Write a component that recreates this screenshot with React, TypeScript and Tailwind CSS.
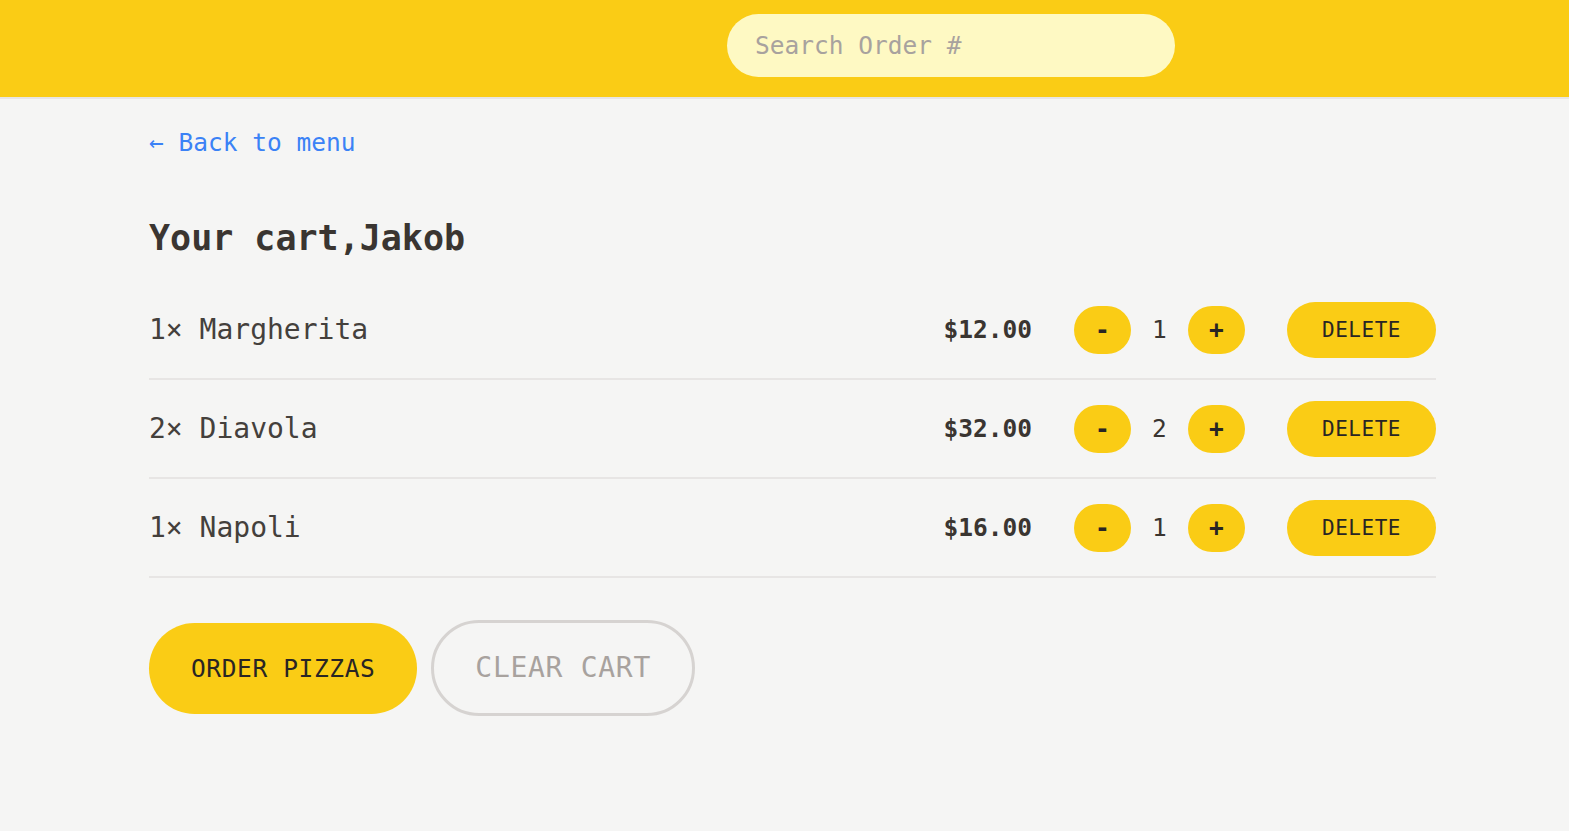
const cart = [
  { name: "Margherita", quantity: 1, total: 12 },
  { name: "Diavola", quantity: 2, total: 32 },
  { name: "Napoli", quantity: 1, total: 16 },
];

const mono = "font-['DejaVu_Sans_Mono','Liberation_Mono',monospace]";

const RoundButton = ({ children }: { children: string }) => (
  <button className="flex h-[48px] w-[57px] items-center justify-center rounded-full bg-[#facc15] text-[24.5px] font-semibold leading-[35px] text-[#292524]">
    {children}
  </button>
);

const CartRow = ({ name, quantity, total }: (typeof cart)[number]) => (
  <li className="flex items-center justify-between py-[20.5px]">
    <p className="text-[28px] leading-[42px] text-[#44403c]">
      {quantity}&times; {name}
    </p>
    <div className="flex items-center gap-[42px]">
      <p className="text-[24.5px] font-bold leading-[35px] text-[#3a3531]">
        ${total.toFixed(2)}
      </p>
      <div className="flex items-center gap-[21px]">
        <RoundButton>-</RoundButton>
        <span className="w-[15px] text-center text-[24.5px] font-medium leading-[35px] text-[#3a3531]">
          {quantity}
        </span>
        <RoundButton>+</RoundButton>
      </div>
      <button className="h-[56px] rounded-full bg-[#facc15] px-[35px] text-[21px] font-normal uppercase leading-[28px] tracking-wide text-[#292524]">
        Delete
      </button>
    </div>
  </li>
);

export default function App() {
  return (
    <div className={`min-h-screen bg-[#f5f5f4] ${mono}`}>
      <header className="h-[99px] border-b-2 border-[#e7e5e4] bg-[#facc15] pl-[727px] pt-[14px]">
        <input
          placeholder="Search Order #"
          className="h-[63px] w-[448px] rounded-full bg-[#fef9c3] px-[28px] text-[24.5px] text-[#44403c] outline-none placeholder:text-[#a8a29e]"
        />
      </header>

      <main className="ml-[149px] w-[1287px] pt-[26px]">
        <a href="#" className="text-[24.5px] leading-[35px] text-[#3b82f6]">
          &larr; Back to menu
        </a>

        <h2 className="mt-[54px] text-[35px] font-semibold leading-[49px] text-[#3a3531]">
          Your cart,Jakob
        </h2>

        <ul className="mt-[18px] divide-y-2 divide-[#e7e5e4] border-b-2 border-[#e7e5e4]">
          {cart.map((item) => (
            <CartRow key={item.name} {...item} />
          ))}
        </ul>

        <div className="mt-[42px] flex items-center gap-[14px]">
          <button className="h-[91px] rounded-full bg-[#facc15] px-[42px] text-[24.5px] font-normal uppercase leading-[35px] tracking-wide text-[#292524]">
            Order pizzas
          </button>
          <button className="h-[96px] rounded-full border-[3.5px] border-[#d6d3d1] px-[41px] text-[28px] font-normal uppercase leading-[42px] tracking-wide text-[#a8a29e]">
            Clear cart
          </button>
        </div>
      </main>
    </div>
  );
}
